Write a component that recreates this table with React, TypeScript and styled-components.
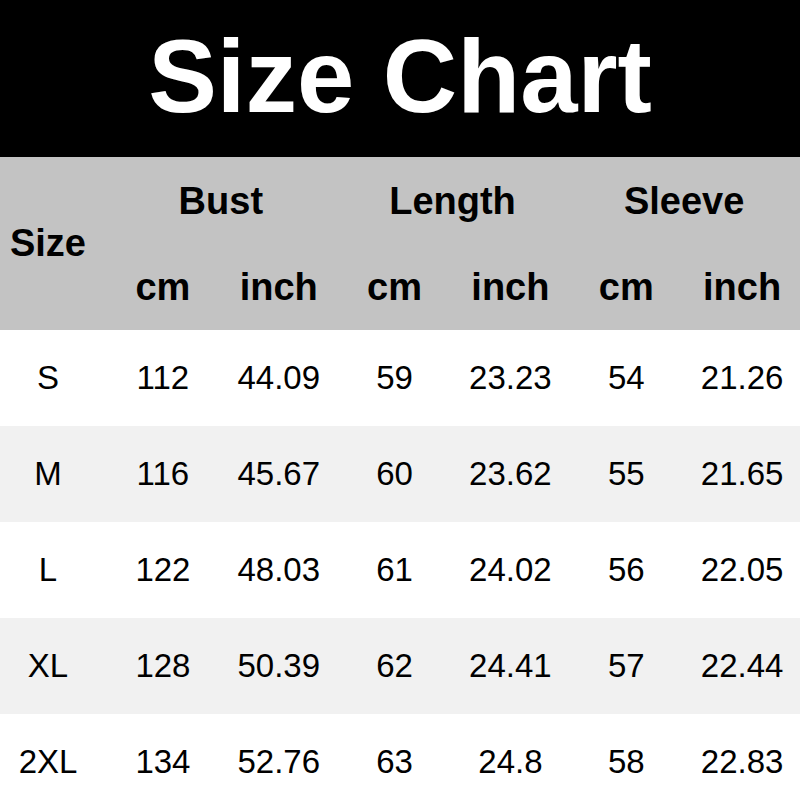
import React from "react";
import styled, { createGlobalStyle } from "styled-components";

const Global = createGlobalStyle`
  html, body { margin: 0; padding: 0; background: #ffffff; }
  body { font-family: "Liberation Sans", Arial, sans-serif; }
`;

const Page = styled.div`
  width: 800px;
  height: 800px;
  overflow: hidden;
  background: #ffffff;
  font-family: "Liberation Sans", Arial, sans-serif;
  color: #000;
`;

const TitleBar = styled.div`
  height: 157px;
  background: #000000;
  display: flex;
  align-items: center;
  justify-content: center;
`;

const Title = styled.h1`
  margin: 0;
  color: #ffffff;
  font-weight: 700;
  font-size: 103px;
  line-height: 1;
  padding-bottom: 4px;
  letter-spacing: 0px;
`;

const HeadGrid = styled.div`
  display: grid;
  grid-template-columns: 105px repeat(6, 1fr);
  grid-template-rows: 88px 85px;
  background: #c3c3c3;
  font-weight: 700;
  font-size: 38px;
`;

const HeadCell = styled.div<{ $col: string; $row: string; $pr?: number }>`
  grid-column: ${(p) => p.$col};
  grid-row: ${(p) => p.$row};
  display: flex;
  align-items: center;
  justify-content: center;
  padding-right: ${(p) => p.$pr ?? 0}px;
`;

const Row = styled.div<{ $shade: boolean }>`
  display: grid;
  grid-template-columns: 105px repeat(6, 1fr);
  height: 96px;
  background: ${(p) => (p.$shade ? "#f1f1f1" : "#ffffff")};
  font-size: 33px;
`;

const Cell = styled.div<{ $first?: boolean }>`
  display: flex;
  align-items: center;
  justify-content: center;
  padding-right: ${(p) => (p.$first ? 9 : 0)}px;
`;

const rows: string[][] = [
  ["S", "112", "44.09", "59", "23.23", "54", "21.26"],
  ["M", "116", "45.67", "60", "23.62", "55", "21.65"],
  ["L", "122", "48.03", "61", "24.02", "56", "22.05"],
  ["XL", "128", "50.39", "62", "24.41", "57", "22.44"],
  ["2XL", "134", "52.76", "63", "24.8", "58", "22.83"],
];

export default function App() {
  return (
    <Page>
      <Global />
      <TitleBar>
        <Title>Size Chart</Title>
      </TitleBar>
      <HeadGrid>
        <HeadCell $col="1" $row="1 / span 2" $pr={9}>Size</HeadCell>
        <HeadCell $col="2 / span 2" $row="1">Bust</HeadCell>
        <HeadCell $col="4 / span 2" $row="1">Length</HeadCell>
        <HeadCell $col="6 / span 2" $row="1">Sleeve</HeadCell>
        {["cm", "inch", "cm", "inch", "cm", "inch"].map((u, i) => (
          <HeadCell key={i} $col={String(i + 2)} $row="2">{u}</HeadCell>
        ))}
      </HeadGrid>
      {rows.map((r, i) => (
        <Row key={r[0]} $shade={i % 2 === 1}>
          {r.map((v, j) => (
            <Cell key={j} $first={j === 0}>{v}</Cell>
          ))}
        </Row>
      ))}
    </Page>
  );
}
